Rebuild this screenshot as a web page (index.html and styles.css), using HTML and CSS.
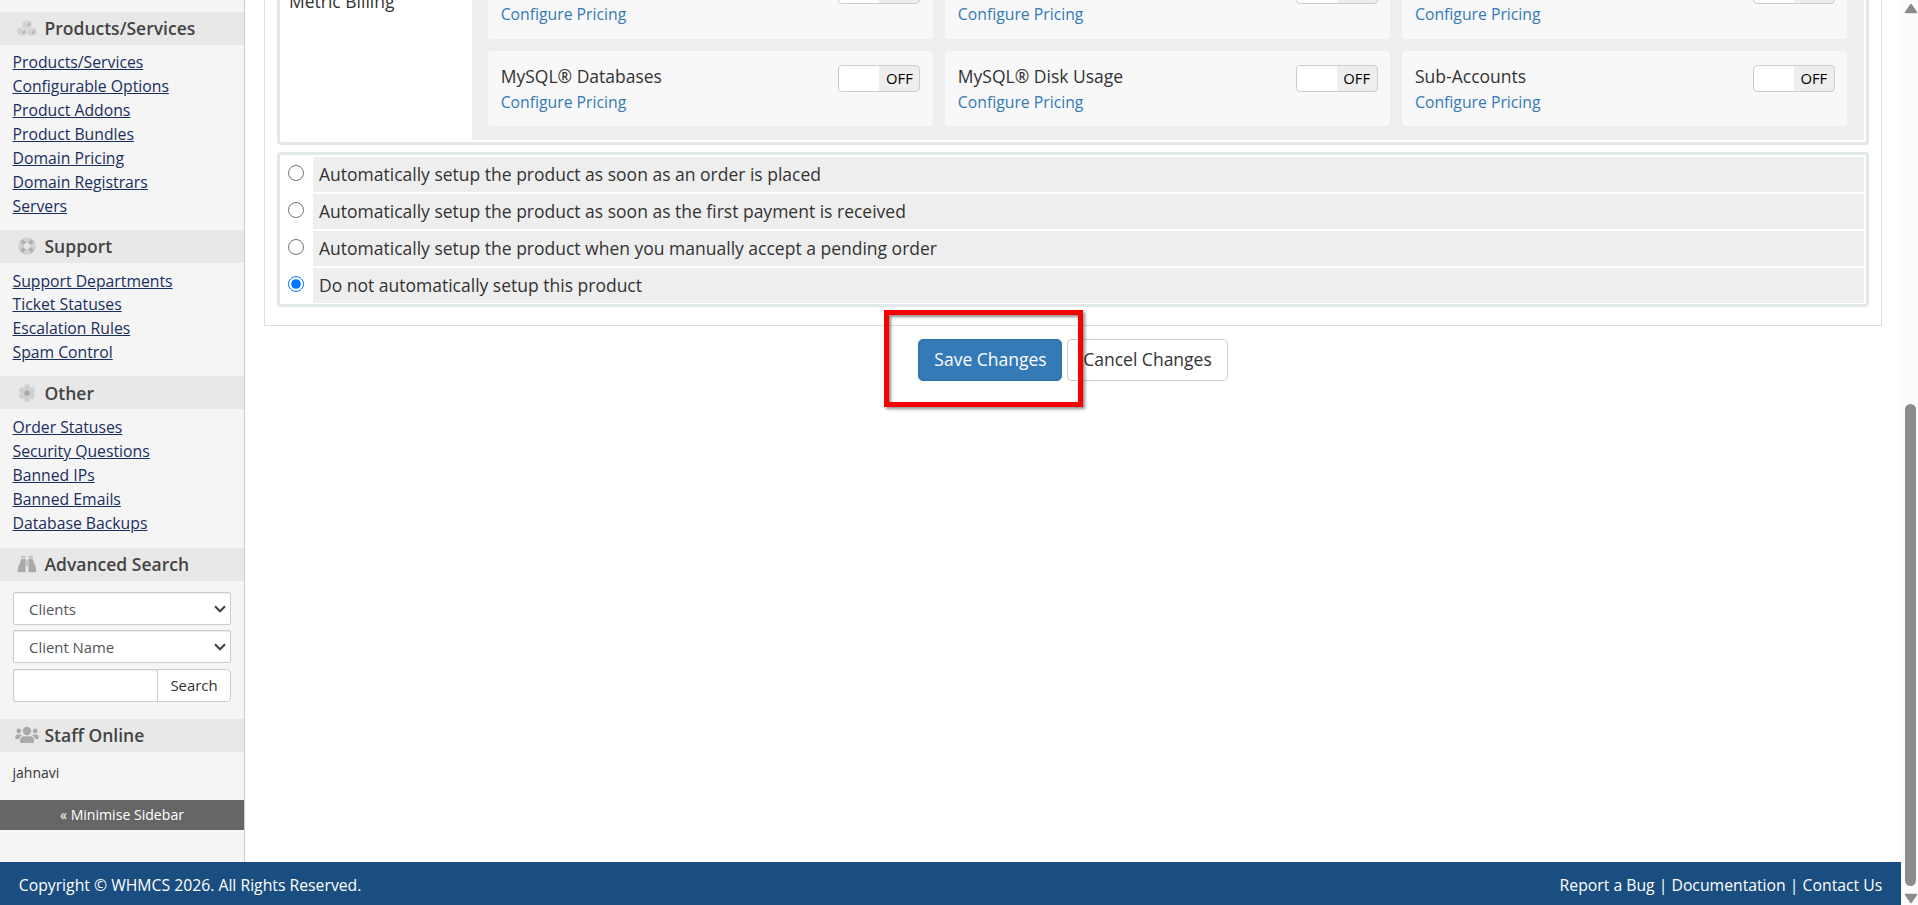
FILE: index.html
```
<!DOCTYPE html>
<html lang="en">
<head>
    <meta charset="UTF-8">
    <meta name="viewport" content="width=device-width, initial-scale=1.0">
    <title>WHMCS - Products/Services</title>
    <link rel="stylesheet" href="styles.css">
</head>
<body>
    <div class="window">
        <div class="page">
            <div class="wrapper">
                <div class="sidebar">
                    <h3 class="side-title first">
                        <svg class="icon" viewBox="0 0 20 18">
                            <path fill="#d2d2d2" d="M10 .8l4.500 1.700v5l-4.500 1.700-4.500-1.700v-5zM5.200 8.300l4.400 1.700v5L5.200 16.900.6 15v-5zM14.800 8.300l4.600 1.700v5l-4.600 1.900-4.400-1.900v-5z"/>
                            <path fill="#b4b4b4" d="M10.600 4.700l2.700-1.100v2.600l-2.700 1.200zM5.700 12.400l2.700-1.100v2.600l-2.700 1.200zM15.300 12.400l2.700-1.100v2.600l-2.700 1.200z"/>
                            <path fill="#e2e2e2" d="M10 1.700l2.600 1-2.600 1-2.600-1zM5.200 9.300l2.600 1-2.600 1-2.600-1zM14.800 9.300l2.600 1-2.600 1-2.600-1z"/>
                        </svg>
                        Products/Services
                    </h3>
                    <ul class="menu first-menu">
                        <li><a href="#">Products/Services</a></li>
                        <li><a href="#">Configurable Options</a></li>
                        <li><a href="#">Product Addons</a></li>
                        <li><a href="#">Product Bundles</a></li>
                        <li><a href="#">Domain Pricing</a></li>
                        <li><a href="#">Domain Registrars</a></li>
                        <li><a href="#">Servers</a></li>
                    </ul>
                    <h3 class="side-title">
                        <svg class="icon" viewBox="0 0 20 18">
                            <circle cx="10" cy="9" r="6" fill="none" stroke="#d0d0d0" stroke-width="5.400"/>
                            <path stroke="#b0b0b0" stroke-width="3.600" d="M4.500 3.500l3.200 3.200M15.500 3.500l-3.200 3.200M4.500 14.500l3.200-3.200M15.500 14.500l-3.200-3.200"/>
                        </svg>
                        Support
                    </h3>
                    <ul class="menu">
                        <li><a href="#">Support Departments</a></li>
                        <li><a href="#">Ticket Statuses</a></li>
                        <li><a href="#">Escalation Rules</a></li>
                        <li><a href="#">Spam Control</a></li>
                    </ul>
                    <h3 class="side-title">
                        <svg class="icon" viewBox="0 0 20 18">
                            <circle cx="10" cy="9" r="6.800" fill="#d0d0d0"/>
                            <path stroke="#d0d0d0" stroke-width="5" stroke-linejoin="round" d="M10 .3v17.400M2.700 4.800l14.600 8.400M17.300 4.800L2.700 13.200"/>
                            <circle cx="10" cy="9" r="2.700" fill="#a8a8a8"/>
                        </svg>
                        Other
                    </h3>
                    <ul class="menu last-menu">
                        <li><a href="#">Order Statuses</a></li>
                        <li><a href="#">Security Questions</a></li>
                        <li><a href="#">Banned IPs</a></li>
                        <li><a href="#">Banned Emails</a></li>
                        <li><a href="#">Database Backups</a></li>
                    </ul>
                    <h3 class="side-title">
                        <svg class="icon" viewBox="0 0 20 18">
                            <path fill="#aaa" d="M4 3.800h4.500v12.400q0 1-1 1H1.700q-1 0-1-1C.7 11 3.300 9 4 3.800zM16 3.800h-4.500v12.400q0 1 1 1h5.800q1 0 1-1C19.300 11 16.700 9 16 3.800z"/>
                            <path fill="#c4c4c4" d="M4.200.8h4v2.300h-4zM11.800.8h4v2.300h-4zM8.500 5h3v6h-3z"/>
                        </svg>
                        Advanced Search
                    </h3>
                    <form class="search">
                        <div class="field">
                            <select>
                                <option>Clients</option>
                            </select>
                            <svg class="chevron" viewBox="0 0 12 8"><path d="M1 1.200l5 5 5-5"/></svg>
                        </div>
                        <div class="field">
                            <select>
                                <option>Client Name</option>
                            </select>
                            <svg class="chevron" viewBox="0 0 12 8"><path d="M1 1.200l5 5 5-5"/></svg>
                        </div>
                        <div class="search-group">
                            <input type="text" class="search-input">
                            <button type="button" class="search-btn">Search</button>
                        </div>
                    </form>
                    <h3 class="side-title">
                        <svg class="icon users" viewBox="0 0 24 18">
                            <g fill="#aaa">
                                <circle cx="12" cy="5" r="4.200"/>
                                <circle cx="3.800" cy="5" r="2.400"/>
                                <circle cx="20.200" cy="5" r="2.400"/>
                                <path d="M5 16v-1.500q0-4.300 4.300-4.300h5.400q4.300 0 4.300 4.300V16q0 1-1 1H6q-1 0-1-1zM.3 12.300V11q0-2.600 2.600-2.600h2q1 0 2 .8-2.600 1.300-3 3.900H1.200q-.9 0-.9-.8zM23.700 12.300V11q0-2.600-2.600-2.600h-2q-1 0-2 .8 2.600 1.300 3 3.900h2.700q.9 0 .9-.8z"/>
                            </g>
                        </svg>
                        Staff Online
                    </h3>
                    <div class="staff">jahnavi</div>
                    <a class="minimise" href="#">« Minimise Sidebar</a>
                </div>

                <div class="content">
                    <div class="tab-content">
                        <div class="panel metrics">
                            <div class="label">Metric Billing</div>
                            <div class="cards">
                                <div class="card">
                                    <div><p></p><a href="#">Configure Pricing</a></div>
                                    <div class="switch"></div>
                                </div>
                                <div class="card">
                                    <div><p></p><a href="#">Configure Pricing</a></div>
                                    <div class="switch"></div>
                                </div>
                                <div class="card">
                                    <div><p></p><a href="#">Configure Pricing</a></div>
                                    <div class="switch"></div>
                                </div>
                                <div class="card">
                                    <div><p>MySQL® Databases</p><a href="#">Configure Pricing</a></div>
                                    <div class="switch"><span>OFF</span></div>
                                </div>
                                <div class="card">
                                    <div><p>MySQL® Disk Usage</p><a href="#">Configure Pricing</a></div>
                                    <div class="switch"><span>OFF</span></div>
                                </div>
                                <div class="card">
                                    <div><p>Sub-Accounts</p><a href="#">Configure Pricing</a></div>
                                    <div class="switch"><span>OFF</span></div>
                                </div>
                            </div>
                        </div>
                        <div class="panel setup">
                            <label class="option"><input type="radio" name="autosetup"><span>Automatically setup the product as soon as an order is placed</span></label>
                            <label class="option"><input type="radio" name="autosetup"><span>Automatically setup the product as soon as the first payment is received</span></label>
                            <label class="option"><input type="radio" name="autosetup"><span>Automatically setup the product when you manually accept a pending order</span></label>
                            <label class="option"><input type="radio" name="autosetup" checked><span>Do not automatically setup this product</span></label>
                        </div>
                    </div>
                    <div class="buttons">
                        <button class="btn save">Save Changes</button>
                        <button class="btn cancel">Cancel Changes</button>
                        <div class="highlight"></div>
                    </div>
                </div>
            </div>
            <div class="footer">
                <span class="copyright">Copyright © WHMCS 2026. All Rights Reserved.</span>
                <span class="links"><a href="#">Report a Bug</a> | <a href="#">Documentation</a> | <a href="#">Contact Us</a></span>
            </div>
        </div>
        <div class="scrollbar">
            <svg class="arrow" viewBox="0 0 14 11"><path d="M7 1.500L12.500 9.500H1.500z"/></svg>
            <div class="thumb"></div>
            <svg class="arrow" viewBox="0 0 14 11"><path d="M7 9.500L12.500 1.500H1.500z"/></svg>
        </div>
    </div>
</body>
</html>
```
FILE: styles.css
```
*{
    box-sizing: border-box;
}
body{
    margin: 0;
    font-family: "Open Sans", sans-serif;
    font-size: 17.5px;
    color: #333;
    background-color: #fff;
    overflow: hidden;
}
h3, p, ul{
    margin: 0;
    padding: 0;
}
.window{
    display: flex;
    height: 905px;
}
.page{
    flex: 1;
    display: flex;
    flex-direction: column;
}
.wrapper{
    display: flex;
    height: 862px;
}

/* sidebar */
.sidebar{
    width: 245px;
    background-color: #f5f5f5;
    border-right: 1px solid #ccc;
}
.side-title{
    display: flex;
    align-items: center;
    height: 32.7px;
    padding-left: 16.5px;
    background-color: #e8e8e8;
    color: #444;
    font-size: 17.5px;
    font-weight: 600;
}
.first{
    margin-top: 12px;
}
.icon{
    width: 20px;
    height: 18px;
    margin-right: 8px;
}
.users{
    width: 24px;
    margin-left: -2px;
    margin-right: 6px;
}
.menu{
    list-style: none;
    padding: 6px 12.5px 12.2px;
}
.first-menu{
    padding-top: 5.6px;
    padding-bottom: 12.3px;
}
.last-menu{
    padding-bottom: 13.5px;
}
.menu li{
    height: 23.9px;
    line-height: 23.9px;
}
.menu a{
    color: #1a2e5f;
    font-size: 15.75px;
    text-decoration: underline;
}
.search{
    padding: 11.5px 12.5px 17px 13px;
    height: 138.5px;
}
.field{
    position: relative;
    width: 218px;
    height: 32.5px;
    margin-bottom: 5.5px;
}
.field select{
    width: 100%;
    height: 100%;
    padding: 1px 0 0 15px;
    border: 1px solid #ccc;
    border-radius: 2px;
    background-color: #fff;
    box-shadow: inset 0 1px 1px rgba(0, 0, 0, 0.075);
    color: #555;
    font-family: inherit;
    font-size: 14.9px;
    appearance: none;
}
.chevron{
    position: absolute;
    right: 5px;
    top: 13px;
    width: 12px;
    height: 8px;
    fill: none;
    stroke: #444;
    stroke-width: 2.2;
}
.search-group{
    display: flex;
    width: 218px;
    height: 33px;
    margin-top: 6px;
}
.search-input{
    width: 144px;
    border: 1px solid #ccc;
    border-right: 0;
    border-radius: 3px 0 0 3px;
    box-shadow: inset 0 1px 1px rgba(0, 0, 0, 0.075);
}
.search-btn{
    flex: 1;
    padding: 0;
    border: 1px solid #ccc;
    border-radius: 0 4px 4px 0;
    background-color: #fff;
    color: #333;
    font-family: inherit;
    font-size: 14.9px;
}
.staff{
    height: 48.5px;
    padding: 8px 12.5px;
    font-size: 14px;
    line-height: 25px;
}
.minimise{
    display: block;
    height: 30px;
    background-color: #666;
    color: #fff;
    font-size: 14.1px;
    line-height: 30px;
    text-align: center;
    text-decoration: none;
}

/* main area */
.content{
    flex: 1;
    padding: 0 19px;
}
.tab-content{
    height: 326px;
    padding: 0 12px;
    border: 1px solid #ddd;
    border-top: 0;
}
.panel{
    border: 3px solid #e2e7e9;
    border-radius: 4px;
}
.metrics{
    display: flex;
    align-items: flex-end;
    height: 145px;
    padding: 0 2px 2px;
    border-top: 0;
    border-top-left-radius: 0;
    border-top-right-radius: 0;
    overflow: hidden;
}
.label{
    width: 190px;
    height: 151px;
    padding-left: 7px;
    line-height: 24px;
}
.cards{
    flex: 1;
    display: grid;
    grid-template-columns: repeat(3, 1fr);
    gap: 12px;
    padding: 0 16.5px 14px 16px;
    background-color: #eee;
}
.card{
    display: flex;
    justify-content: space-between;
    height: 75.5px;
    padding: 12.5px 12.7px;
    border-radius: 4px;
    background-color: #f8f8f8;
}
.card p{
    height: 26.9px;
    line-height: 26px;
}
.card a{
    display: block;
    color: #337ab7;
    font-size: 15.75px;
    line-height: 25px;
    text-decoration: none;
}
.switch{
    display: flex;
    width: 82px;
    height: 27px;
    margin-top: 1.5px;
    padding-left: 40px;
    border: 1px solid #ccc;
    border-radius: 4px;
    background: linear-gradient(to right, #fff 50%, #eee 50%);
}
.switch span{
    flex: 1;
    color: #000;
    font-size: 14.8px;
    line-height: 25px;
    text-align: center;
}
.setup{
    display: flex;
    flex-direction: column;
    gap: 2px;
    height: 155px;
    margin-top: 7px;
    padding: 2px;
}
.option{
    flex: 1;
    display: flex;
}
.option input{
    width: 16px;
    height: 16px;
    margin: 8px 9px 0 6px;
}
.option span{
    flex: 1;
    padding-left: 6px;
    background-color: #eee;
    line-height: 35px;
}
.buttons{
    display: flex;
    justify-content: center;
    gap: 5px;
    position: relative;
    padding-top: 13px;
}
.btn{
    height: 42px;
    padding: 0 0 2px;
    border-radius: 5px;
    font-family: inherit;
    font-size: 17.5px;
}
.save{
    width: 144px;
    padding-left: 1px;
    border: 1px solid #2e6da4;
    background-color: #337ab7;
    color: #fff;
}
.cancel{
    width: 161px;
    border: 1px solid #ccc;
    background-color: #fff;
    color: #333;
}
/* red frame over the save button */
.highlight{
    position: absolute;
    left: 620px;
    top: -16px;
    width: 199px;
    height: 97px;
    border: 5px solid #f60000;
    box-shadow: 2px 2px 3px rgba(0, 0, 0, 0.45), inset 2px 2px 3px rgba(0, 0, 0, 0.45);
}

/* footer */
.footer{
    display: flex;
    justify-content: space-between;
    align-items: center;
    height: 43px;
    padding: 3px 18.75px 0;
    background-color: #1a4d80;
    color: #fff;
    font-size: 15.75px;
}
.footer a{
    color: #fff;
    text-decoration: none;
}

/* scrollbar */
.scrollbar{
    display: flex;
    flex-direction: column;
    width: 17px;
    padding: 3px 1px 1px 3px;
    background-color: #fcfcfc;
}
.arrow{
    width: 14px;
    height: 11px;
    fill: #8b8b8b;
    stroke: #8b8b8b;
    stroke-width: 1.5;
    stroke-linejoin: round;
}
.thumb{
    width: 11px;
    height: 482px;
    margin: auto 0 7px 1px;
    border-radius: 6px;
    background-color: #8b8b8b;
}
```
